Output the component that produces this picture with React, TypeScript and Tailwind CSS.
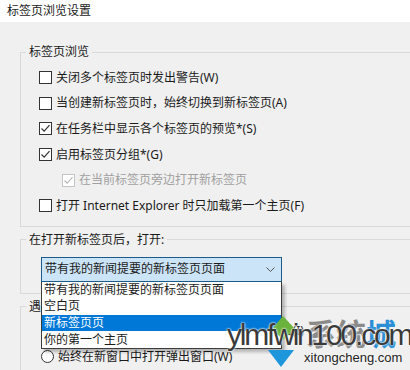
import React from "react";

const Check: React.FC<{ checked?: boolean; disabled?: boolean }> = ({ checked, disabled }) => (
  <span
    className={`flex h-[13px] w-[13px] shrink-0 items-center justify-center border bg-white ${
      disabled ? "border-[#c4c4c4]" : "border-[#333333]"
    }`}
  >
    {checked && (
      <svg width="11" height="11" viewBox="0 0 11 11">
        <path
          d="M1.5 5.5 L4.2 8.2 L9.5 2.2"
          fill="none"
          stroke={disabled ? "#b8b8b8" : "#333333"}
          strokeWidth="1.2"
        />
      </svg>
    )}
  </span>
);

const Row: React.FC<{ label: string; checked?: boolean; disabled?: boolean; indent?: boolean }> = ({
  label,
  checked,
  disabled,
  indent,
}) => (
  <div className={`flex h-[25.6px] items-center gap-[4px] ${indent ? "pl-[23px]" : ""}`}>
    <Check checked={checked} disabled={disabled} />
    <span className={disabled ? "text-[#a0a0a0]" : "text-[#1a1a1a]"}>{label}</span>
  </div>
);

const Radio: React.FC<{ label: string }> = ({ label }) => (
  <div className="flex h-[26px] items-center gap-[4px]">
    <span className="h-[13px] w-[13px] shrink-0 rounded-full border border-[#333333] bg-white" />
    <span className="text-[#1a1a1a]">{label}</span>
  </div>
);

const options = ["带有我的新闻提要的新标签页页面", "空白页", "新标签页页", "你的第一个主页"];

export default function App() {
  return (
    <div className="relative h-[370px] w-[410px] overflow-hidden bg-[#f0f0f0] font-['Noto_Sans','Noto_Sans_CJK_SC',sans-serif] text-[12px] leading-4 text-[#1a1a1a]">
      <div className="flex h-[22px] items-center bg-white pl-[7px]">标签页浏览设置</div>

      <div className="flex flex-col gap-[5px] pl-[20px] pt-[22px]">
        <fieldset className="mr-[-30px] border border-[#d9d9d9] pb-[7px] pl-[18px] pt-[5px]">
          <legend className="ml-[-13px] px-[3px]">标签页浏览</legend>
          <Row label="关闭多个标签页时发出警告(W)" />
          <Row label="当创建新标签页时，始终切换到新标签页(A)" />
          <Row label="在任务栏中显示各个标签页的预览*(S)" checked />
          <Row label="启用标签页分组*(G)" checked />
          <Row label="在当前标签页旁边打开新标签页" checked disabled indent />
          <Row label="打开 Internet Explorer 时只加载第一个主页(F)" />
        </fieldset>

        <fieldset className="mr-[-30px] border border-[#d9d9d9] pb-[11px] pl-[20px] pt-[9px]">
          <legend className="ml-[-15px] px-[3px]">在打开新标签页后，打开:</legend>
          <div className="relative z-10 w-[241px]">
            <div className="flex h-[25px] items-center justify-between border border-[#1c5a8c] bg-[#cce4f7] pl-[3px] pr-[6px]">
              <span>{options[0]}</span>
              <svg width="9" height="5" viewBox="0 0 9 5">
                <path d="M0.5 0.5 L4.5 4.5 L8.5 0.5" fill="none" stroke="#555555" strokeWidth="1" />
              </svg>
            </div>
            <div className="absolute left-0 top-full w-[241px] border border-t-0 border-[#3c3c3c] bg-white shadow-[3px_3px_3px_rgba(0,0,0,0.25)]">
              {options.map((o, i) => (
                <div
                  key={o}
                  className={`flex h-[16.6px] items-center pl-[2px] ${
                    i === 2 ? "bg-[#0078d7] text-white" : "text-[#1a1a1a]"
                  }`}
                >
                  {o}
                </div>
              ))}
            </div>
          </div>
        </fieldset>

        <fieldset className="mr-[-30px] border border-[#d9d9d9] pl-[20px] pt-[3px]">
          <legend className="ml-[-15px] px-[3px]">遇到弹出窗口时:</legend>
          <Radio label="让 Internet Explorer 决定如何打开弹出窗口(I)" />
          <Radio label="始终在新窗口中打开弹出窗口(W)" />
        </fieldset>
      </div>

      {/* watermark */}
      <div className="pointer-events-none absolute left-[306px] top-[317px] z-20 font-['Noto_Sans_CJK_SC',sans-serif] text-[30px] font-bold leading-none text-[#8a8a8a]">
        系统<span className="text-[#2b8fd6]">城</span>
      </div>
      <svg className="pointer-events-none absolute left-[264px] top-[312px] z-20" width="36" height="58" viewBox="0 0 36 58">
        <polygon points="19,4 31,17 19,28 8,17" fill="#6cb33e" />
        <polygon points="4,38 30,38 17,55" fill="#1e96dc" />
      </svg>
      <div className="pointer-events-none absolute left-[227px] top-[320px] z-30 font-['Liberation_Sans',sans-serif] text-[30px] leading-none tracking-[-2.2px] text-[#3a3a3a] [text-shadow:0_0_2px_#ffffff,0_0_2px_#ffffff]">
        ylmfwin100.com
      </div>
      <div className="pointer-events-none absolute left-[304px] top-[351px] z-30 font-['Liberation_Sans',sans-serif] text-[13px] leading-none text-[#222222] [text-shadow:0_0_2px_#ffffff]">
        xitongcheng.com
      </div>
    </div>
  );
}
